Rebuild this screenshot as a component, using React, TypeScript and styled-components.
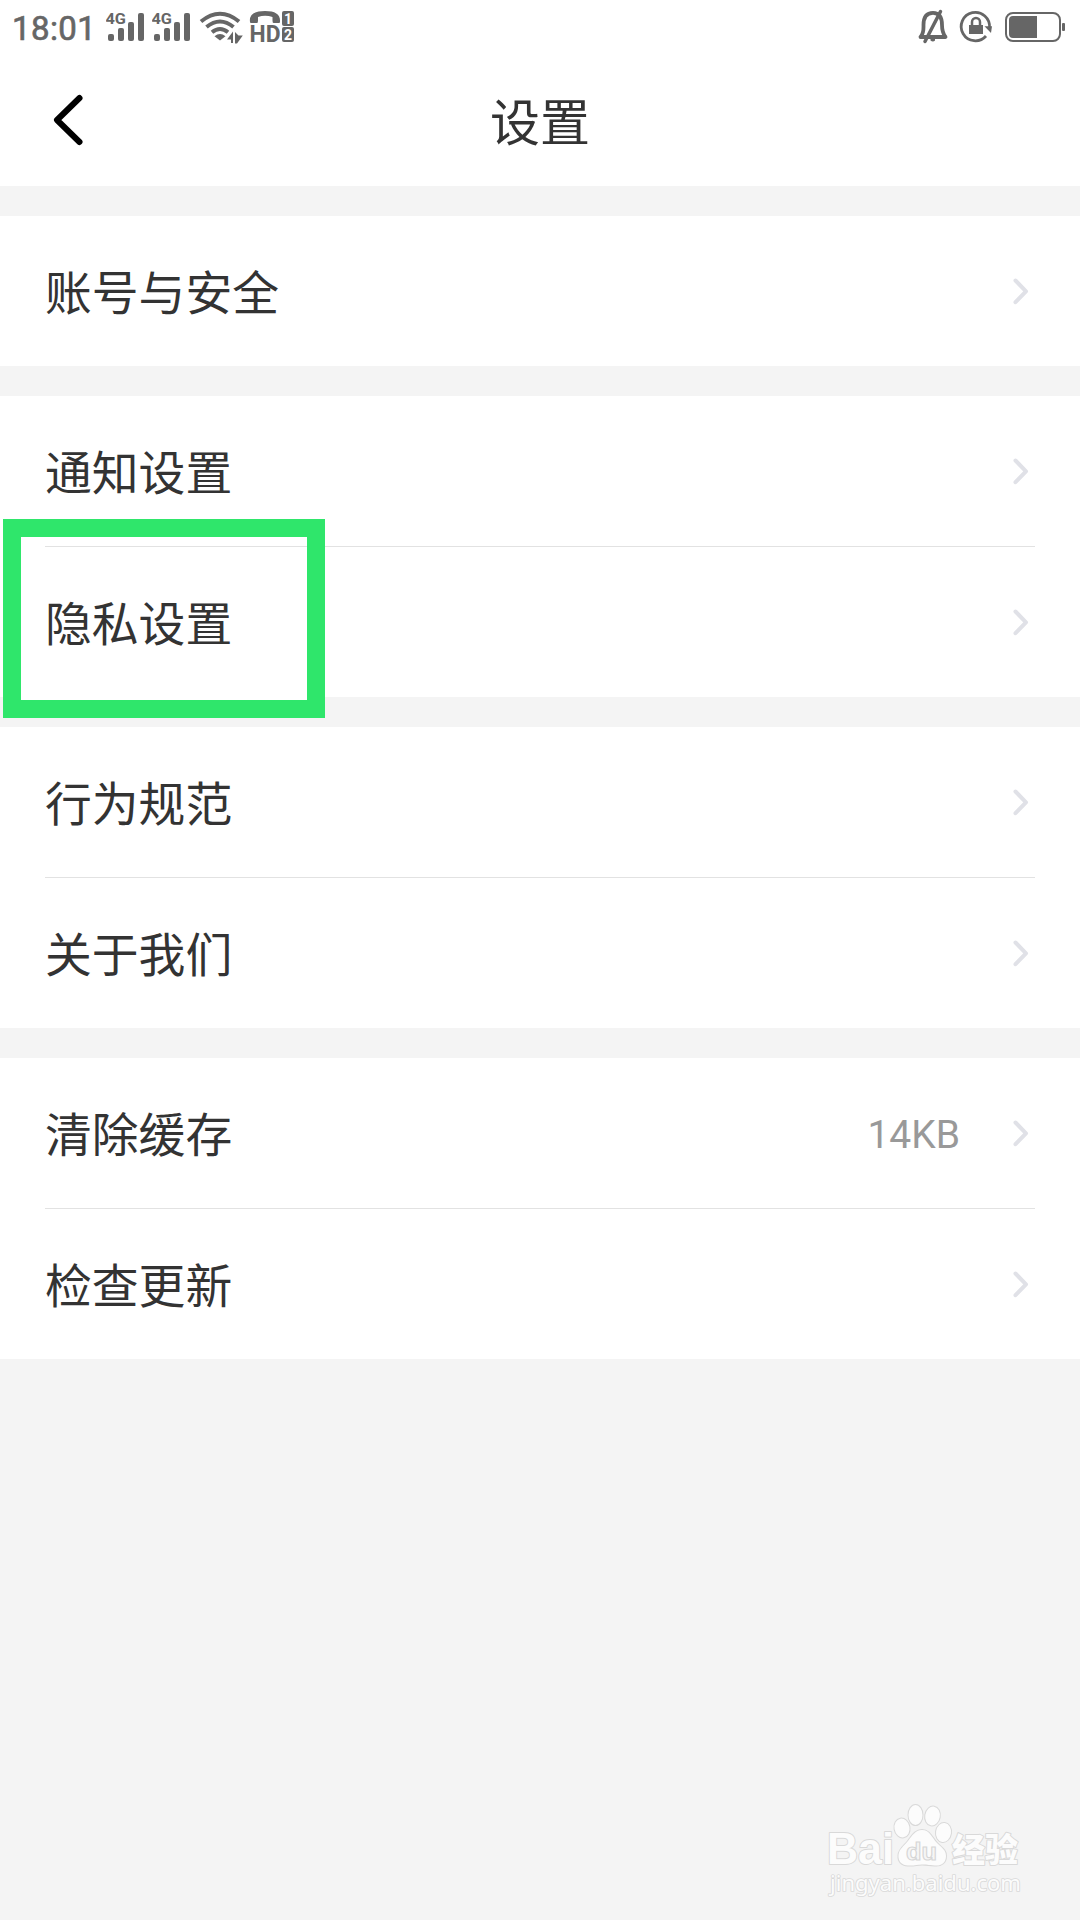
import React from "react";
import styled, { createGlobalStyle } from "styled-components";

const GlobalStyle = createGlobalStyle`
  * { box-sizing: border-box; }
  body {
    margin: 0;
    background: #f4f4f4;
    font-family: Roboto, "Noto Sans CJK SC", sans-serif;
  }
`;

const Screen = styled.div`
  position: relative;
  display: flex;
  flex-direction: column;
  width: 1080px;
  height: 1920px;
  overflow: hidden;
  background: #f4f4f4;
`;

const Top = styled.header`
  height: 186px;
  background: #fff;
`;

const StatusBar = styled.div`
  display: flex;
  justify-content: space-between;
  height: 56px;
  padding: 0 14px 0 12px;
  color: #666;
`;

const StatusGroup = styled.div`
  display: flex;
  align-items: flex-start;
`;

const Clock = styled.span`
  width: 94px;
  padding-top: 9px;
  font-size: 33px;
  font-weight: 400;
  line-height: 39px;
  letter-spacing: 0.4px;
  -webkit-text-stroke: 0.7px #666;
`;

const StatusIcon = styled.svg`
  display: block;
  height: 56px;
  fill: #666;
  font-family: Roboto, sans-serif;
  font-weight: 700;
`;

const TitleBar = styled.div`
  display: grid;
  grid-template-columns: 120px 1fr 120px;
  align-items: center;
  height: 130px;
`;

const BackButton = styled.button`
  display: flex;
  height: 130px;
  padding: 0;
  border: 0;
  background: none;
`;

const Title = styled.h1`
  margin: 0;
  padding-top: 6px;
  color: #333;
  font-size: 50px;
  font-weight: 400;
  line-height: 72px;
  text-align: center;
`;

const Section = styled.section`
  margin-top: 30px;
  background: #fff;
`;

const Row = styled.div`
  display: flex;
  align-items: center;
  height: 150px;
  padding: 0 50px 0 45px;
`;

const Divider = styled.div`
  height: 1px;
  margin: 0 45px;
  background: #e2e2e2;
`;

const Label = styled.span`
  flex: 1;
  padding-top: 6px;
  color: #333;
  font-size: 46.8px;
  line-height: 68px;
`;

const Value = styled.span`
  margin-right: 52px;
  padding-top: 4px;
  color: #999;
  font-size: 39px;
  line-height: 46px;
`;

const Arrow = styled.svg`
  display: block;
  width: 18px;
  height: 30px;
`;

const Highlight = styled.div`
  position: absolute;
  left: 2.500px;
  top: 519px;
  width: 322.500px;
  height: 199px;
  border: 18px solid #2fe66b;
  box-shadow: inset 0 -3px 0 #fff;
`;

const Watermark = styled.svg`
  position: absolute;
  left: 810px;
  top: 1790px;
  width: 230px;
  height: 120px;
`;

function Chevron() {
  return (
    <Arrow viewBox="0 0 18 30">
      <path d="M3.500 4.500 L14 15.300 L3.500 26.200" fill="none" stroke="#e0e1e7" strokeWidth="4" strokeLinecap="round" strokeLinejoin="round" />
    </Arrow>
  );
}

function Signal() {
  return (
    <StatusIcon width="46" viewBox="0 0 46 56">
      <text x="-0.500" y="23.500" fontSize="14.500" textLength="20.500" lengthAdjust="spacingAndGlyphs">4G</text>
      <rect x="2" y="34" width="6" height="7" rx="2" />
      <rect x="12" y="28" width="6" height="13" rx="2" />
      <rect x="22" y="22" width="6" height="19" rx="2" />
      <rect x="32" y="13" width="6" height="28" rx="2" />
    </StatusIcon>
  );
}

function Wifi() {
  return (
    <StatusIcon width="50" viewBox="198 0 50 56">
      <g fill="none" stroke="#666" strokeWidth="4">
        <path d="M201 21.5 Q220 6 239 21.5" />
        <path d="M206.5 27 Q220 16 233.5 27" />
        <path d="M212 32.3 Q220 25.8 228 32.3" />
      </g>
      <path d="M214.5 36.2 Q220 32 225.5 36.2 L220 40.5 Z" />
      <path d="M233 31.500 V43 H231 V39.500 H227 Z M235 32 V43.500 H237 L242.800 35.500 H238.500 Z" stroke="#fff" strokeWidth="1" paintOrder="stroke" />
    </StatusIcon>
  );
}

function HdCall() {
  return (
    <StatusIcon width="48" viewBox="248 0 48 56">
      <path d="M250 22 Q248.5 11 265 11 Q281 11 280 22 Q280 23 279 23 H273.5 Q272.5 23 272.5 20.5 V17 Q265 14.5 258 17 V20.5 Q258 23 257 23 H251 Q250 23 250 22 Z" />
      <text x="249.5" y="41.8" fontSize="24" textLength="31" lengthAdjust="spacingAndGlyphs">HD</text>
      <rect x="282" y="11" width="12" height="15" rx="2" />
      <rect x="282" y="27" width="12" height="15" rx="2" />
      <g fill="#fff" fontSize="14" textAnchor="middle">
        <text x="288" y="23.5">1</text>
        <text x="288" y="39.5">2</text>
      </g>
    </StatusIcon>
  );
}

function SystemIcons() {
  return (
    <StatusIcon width="150" viewBox="916 0 150 56">
      <path d="M920.500 37 C924 33 923.5 30 923.5 25 C923.5 17 927 12.8 933 12.8 C939 12.8 942 17 942 25 C942 30 942.5 33 945.5 37 Z" fill="none" stroke="#666" strokeWidth="3.8" strokeLinejoin="round" />
      <path d="M940.5 11.5 L925 41.5" stroke="#666" strokeWidth="3.5" strokeLinecap="round" />
      <path d="M930.5 39 H935 V40.5 Q933 42.5 930.5 40.5 Z" />
      <path d="M989.5 28 A14.2 14.2 0 1 0 986 36" fill="none" stroke="#666" strokeWidth="2.8" />
      <path d="M984.5 26.2 H992 L991 33 Z" />
      <rect x="969" y="25" width="14" height="9" />
      <path d="M972 25.5 V22 A4 4 0 0 1 980 22 V25.5" fill="none" stroke="#666" strokeWidth="2.5" />
      <rect x="1006" y="13" width="54" height="28" rx="7" fill="none" stroke="#666" strokeWidth="2" />
      <path d="M1013 16 H1037 V38 H1013 Q1009 38 1009 34 V20 Q1009 16 1013 16 Z" />
      <rect x="1062" y="23" width="3" height="8" rx="1" />
    </StatusIcon>
  );
}

function BrandMark() {
  return (
    <Watermark viewBox="0 0 230 120">
      <g fill="#fcfcfc" stroke="#d9d9d9" strokeWidth="2" strokeLinejoin="round" paintOrder="stroke">
        <text x="17" y="74" fontFamily="'Liberation Sans', sans-serif" fontWeight="700" fontSize="44.500" textLength="67" lengthAdjust="spacingAndGlyphs">Bai</text>
        <ellipse cx="92" cy="38" rx="7.5" ry="9.5" transform="rotate(-10 92 38)" />
        <ellipse cx="105.5" cy="25" rx="7" ry="10" />
        <ellipse cx="122.5" cy="26" rx="7.3" ry="9.5" transform="rotate(10 122.5 26)" />
        <ellipse cx="133.5" cy="42.5" rx="7.5" ry="9.5" transform="rotate(8 133.5 42.5)" />
        <path d="M112 40 C120 40 122 48 127 53 C132 58 136 60 136 66 C136 73 131 76 125 75.5 C118 75 116 74.5 112 74.5 C107 74.5 104 76 98 75.5 C92 75 88 72 88.500 65 C89 59 94 56 98 51 C102 46 105 40 112 40 Z" />
        <text x="142" y="72" fontFamily="'Noto Sans CJK SC', sans-serif" fontWeight="900" fontSize="33" textLength="66">经验</text>
        <text x="20" y="100.500" strokeWidth="1.700" fontFamily="'Noto Sans', sans-serif" fontSize="21.500" textLength="191" lengthAdjust="spacingAndGlyphs">jingyan.baidu.com</text>
      </g>
      <text x="96" y="69.500" fontFamily="'Liberation Sans', sans-serif" fontWeight="700" fontSize="24" fill="#f6f6f6" stroke="#d6d6d6" strokeWidth="1.100" textLength="31" lengthAdjust="spacingAndGlyphs">du</text>
    </Watermark>
  );
}

type Item = { label: string; value?: string };

const sections: Item[][] = [
  [{ label: "账号与安全" }],
  [{ label: "通知设置" }, { label: "隐私设置" }],
  [{ label: "行为规范" }, { label: "关于我们" }],
  [{ label: "清除缓存", value: "14KB" }, { label: "检查更新" }],
];

export default function App() {
  return (
    <Screen>
      <GlobalStyle />
      <Top>
        <StatusBar>
          <StatusGroup>
            <Clock>18:01</Clock>
            <Signal />
            <Signal />
            <Wifi />
            <HdCall />
          </StatusGroup>
          <StatusGroup>
            <SystemIcons />
          </StatusGroup>
        </StatusBar>
        <TitleBar>
          <BackButton aria-label="返回">
            <svg width="120" height="130" viewBox="0 56 120 130">
              <path d="M79.500 98 L57 120 L79.500 142" fill="none" stroke="#000" strokeWidth="6" strokeLinecap="round" strokeLinejoin="round" />
            </svg>
          </BackButton>
          <Title>设置</Title>
        </TitleBar>
      </Top>
      {sections.map((items) => (
        <Section key={items[0].label}>
          {items.map((item, i) => (
            <React.Fragment key={item.label}>
              {i > 0 && <Divider />}
              <Row>
                <Label>{item.label}</Label>
                {item.value && <Value>{item.value}</Value>}
                <Chevron />
              </Row>
            </React.Fragment>
          ))}
        </Section>
      ))}
      <Highlight />
      <BrandMark />
    </Screen>
  );
}
